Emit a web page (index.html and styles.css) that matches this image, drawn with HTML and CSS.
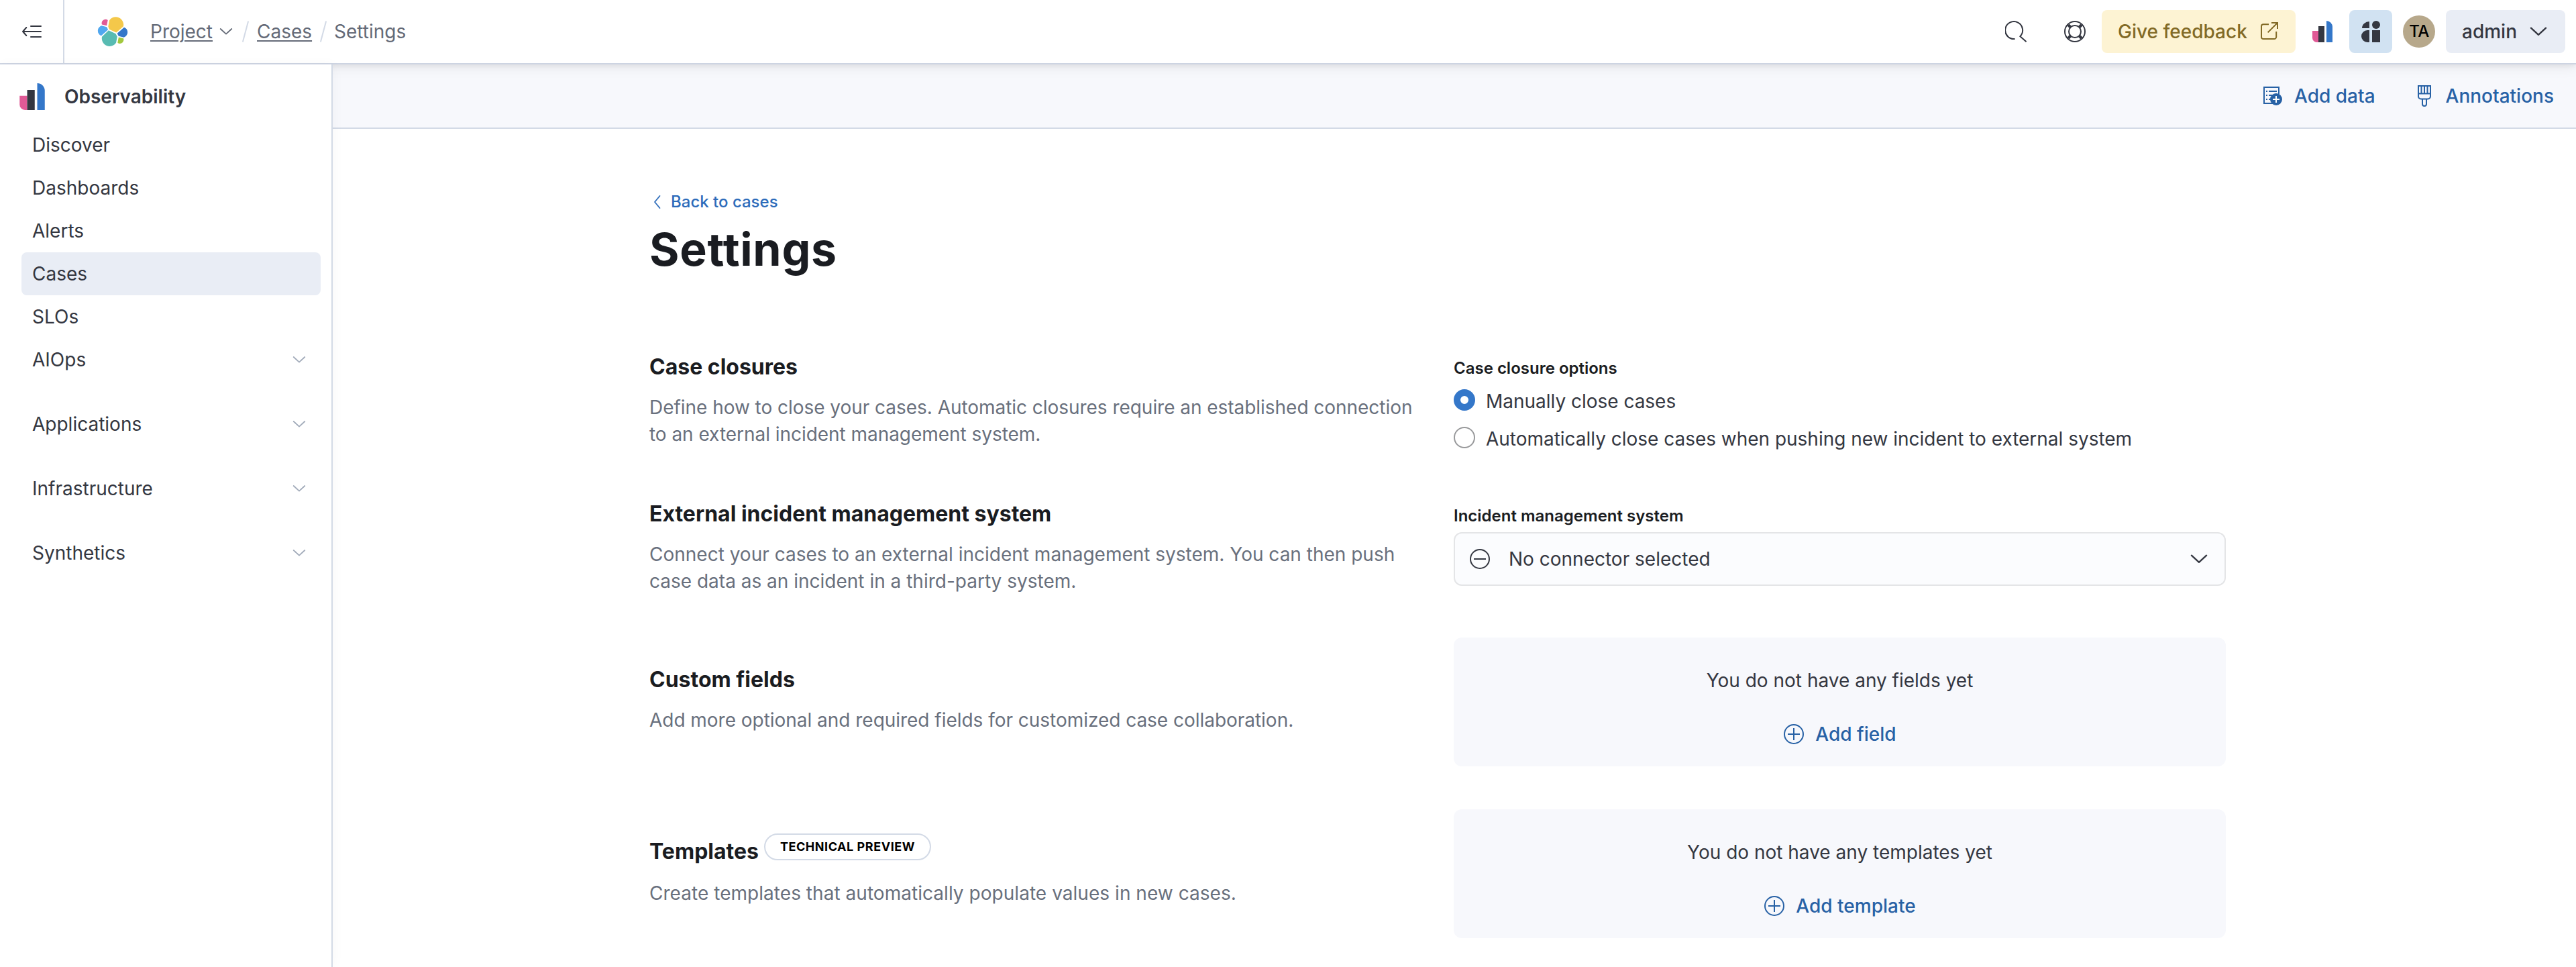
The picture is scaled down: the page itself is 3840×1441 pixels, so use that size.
FILE: index.html
```html
<!DOCTYPE html>
<html lang="en">
<head>
<meta charset="utf-8">
<title>Settings - Cases</title>
<link rel="stylesheet" href="styles.css">
</head>
<body>
<svg class="defs" width="0" height="0" aria-hidden="true">
  <symbol id="chevron" viewBox="0 0 32 32"><path d="M4.900 10.700 16 20.800 27.100 10.700" fill="none" stroke="currentColor" stroke-width="2.400" stroke-linecap="round" stroke-linejoin="round"/></symbol>
  <symbol id="observability" viewBox="0 0 32 32"><path fill="#e05a96" d="M1 15v10.500A6.500 6.500 0 0 0 7.500 32H10V15z"/><path fill="#343741" d="M10 8h9v24h-9z"/><path fill="#3477c9" d="M22 32h9V9a9 9 0 0 0-9-9z"/></symbol>
  <symbol id="plus-circle" viewBox="0 0 32 32"><g fill="none" stroke="currentColor" stroke-width="2"><circle cx="16" cy="16" r="14"/><path d="M16 7v18M7 16h18"/></g></symbol>
</svg>

<header class="header">
  <button class="menu-button" aria-label="Collapse navigation"><svg class="icon" viewBox="0 0 32 32"><path d="M3 16h27M15 8H30M15 24H30M8.300 10 3 16l5.300 6" fill="none" stroke="currentColor" stroke-width="2" stroke-linecap="round" stroke-linejoin="round"/></svg></button>
  <svg class="elastic-logo" viewBox="0 0 32 32"><path fill="#f4c84a" d="M12.580 13.787l7.002 3.211 7.066-6.213a7.850 7.850 0 0 0 .152-1.557c0-4.287-3.464-7.775-7.722-7.775a7.708 7.708 0 0 0-6.372 3.380l-1.176 6.126z"/><path fill="#58bbb2" d="M5.333 21.228A7.964 7.964 0 0 0 5.180 22.800c0 4.300 3.486 7.800 7.770 7.800a7.730 7.730 0 0 0 6.415-3.420l1.166-6.104-1.557-2.992-7.030-3.220z"/><path fill="#e05a96" d="M5.288 9.067l4.800 1.137L11.140 4.730a3.786 3.786 0 0 0-6.090 3.030 3.810 3.810 0 0 0 .239 1.307"/><path fill="#50a7ef" d="M4.872 10.214c-2.145.714-3.640 2.779-3.640 5.052 0 2.213 1.363 4.190 3.410 4.973l6.735-6.120-1.236-2.656z"/><path fill="#a2c83e" d="M20.873 27.180a3.748 3.748 0 0 0 2.286.782 3.786 3.786 0 0 0 3.785-3.790 3.810 3.810 0 0 0-.238-1.305l-4.796-1.127z"/><path fill="#3477c9" d="M21.848 20.563l5.280 1.238c2.147-.715 3.640-2.780 3.640-5.054a5.328 5.328 0 0 0-3.418-4.965l-6.905 6.080z"/></svg>
  <nav class="breadcrumbs">
    <a class="crumb-link project" href="#">Project</a><svg class="crumb-chevron"><use href="#chevron"/></svg>
    <span class="slash"></span>
    <a class="crumb-link" href="#">Cases</a>
    <span class="slash"></span>
    <span class="crumb-current">Settings</span>
  </nav>
  <div class="header-actions">
    <svg class="icon search" viewBox="0 0 16 16"><path d="M7.300 13.500A6.500 6.500 0 1 1 11.200 11.600L15.800 15.600" fill="none" stroke="currentColor"/></svg>
    <svg class="icon help" viewBox="0 0 32 32"><g fill="none" stroke="currentColor"><circle cx="16" cy="16" r="15" stroke-width="2"/><circle cx="16" cy="16" r="9" stroke-width="2"/><path d="m6 6 4 4m12 12 4 4M26 6l-4 4M10 22l-4 4" stroke-width="4.500"/></g></svg>
    <a class="button feedback" href="#">Give feedback<svg class="icon" viewBox="0 0 16 16"><path d="M8 2.600H4A1.500 1.500 0 0 0 2.500 4.100v8A1.500 1.500 0 0 0 4 13.500h8.100a1.500 1.500 0 0 0 1.500-1.500V8M7.300 8.700l7.200-7.200M10 1.500h4.500V6" fill="none" stroke="currentColor"/></svg></a>
    <svg class="icon observability"><use href="#observability"/></svg>
    <button class="news" aria-label="What's new"><svg class="icon" viewBox="0 0 32 32" fill="currentColor"><path d="M3 11h11V1A11 10 0 0 0 3 11z"/><circle cx="24" cy="6" r="6"/><path d="M14 14v18h-3a9 9 0 0 1 0-18zM18 14h12v18H18z"/></svg></button>
    <span class="avatar">TA</span>
    <button class="button admin">admin<svg class="icon"><use href="#chevron"/></svg></button>
  </div>
</header>

<div class="page">
  <aside class="sidebar">
    <div class="solution"><svg class="solution-logo"><use href="#observability"/></svg>Observability</div>
    <nav class="nav">
      <a class="nav-item">Discover</a>
      <a class="nav-item">Dashboards</a>
      <a class="nav-item">Alerts</a>
      <a class="nav-item selected">Cases</a>
      <a class="nav-item">SLOs</a>
      <a class="nav-item group">AIOps<svg class="nav-chevron"><use href="#chevron"/></svg></a>
      <a class="nav-item group">Applications<svg class="nav-chevron"><use href="#chevron"/></svg></a>
      <a class="nav-item group">Infrastructure<svg class="nav-chevron"><use href="#chevron"/></svg></a>
      <a class="nav-item group">Synthetics<svg class="nav-chevron"><use href="#chevron"/></svg></a>
    </nav>
  </aside>

  <div class="main">
    <div class="toolbar">
      <a class="action" href="#"><svg class="icon" viewBox="0 0 32 32"><path d="M3 3h22v24H3z" fill="none" stroke="currentColor" stroke-width="2"/><path d="M6 9h2M10 9h12M6 15h2M10 15h8M6 21h2M10 21h6" stroke="currentColor" stroke-width="2"/><circle cx="21" cy="21" r="9" fill="currentColor"/><path d="M21 16v10M16 21h10" stroke="#fff" stroke-width="2"/></svg>Add data</a>
      <a class="action" href="#"><svg class="icon" viewBox="0 0 32 32"><path d="M7 1h18v15.500a4 4 0 0 1-4 4H11a4 4 0 0 1-4-4zM7 12.500h18M11.500 1v11M16 1v11M20.500 1v11M13 20.500V28a3 3 0 0 0 6 0v-7.500" fill="none" stroke="currentColor" stroke-width="2"/></svg>Annotations</a>
    </div>

    <main class="content">
      <a class="back" href="#"><svg class="back-chevron" viewBox="0 0 24 24"><path d="M15.500 3 8 12l7.500 9" fill="none" stroke="currentColor" stroke-width="1.800" stroke-linecap="round" stroke-linejoin="round"/></svg>Back to cases</a>
      <h1 class="page-title">Settings</h1>

      <section class="row closures">
        <div class="about">
          <h2>Case closures</h2>
          <p>Define how to close your cases. Automatic closures require an established connection<br>to an external incident management system.</p>
        </div>
        <div class="control">
          <div class="label">Case closure options</div>
          <label class="option"><span class="radio checked"></span><span class="option-text">Manually close cases</span></label>
          <label class="option"><span class="radio"></span><span class="option-text">Automatically close cases when pushing new incident to external system</span></label>
        </div>
      </section>

      <section class="row connector">
        <div class="about">
          <h2>External incident management system</h2>
          <p>Connect your cases to an external incident management system. You can then push<br>case data as an incident in a third-party system.</p>
        </div>
        <div class="control">
          <div class="label">Incident management system</div>
          <div class="select"><svg class="icon" viewBox="0 0 32 32"><g fill="none" stroke="currentColor" stroke-width="2"><circle cx="16" cy="16" r="14"/><path d="M7 16h18"/></g></svg><span class="select-value">No connector selected</span><svg class="icon"><use href="#chevron"/></svg></div>
        </div>
      </section>

      <section class="row fields">
        <div class="about">
          <h2>Custom fields</h2>
          <p>Add more optional and required fields for customized case collaboration.</p>
        </div>
        <div class="panel">
          <span>You do not have any fields yet</span>
          <a class="action" href="#"><svg class="icon"><use href="#plus-circle"/></svg>Add field</a>
        </div>
      </section>

      <section class="row templates">
        <div class="about">
          <h2>Templates<span class="badge">Technical preview</span></h2>
          <p>Create templates that automatically populate values in new cases.</p>
        </div>
        <div class="panel">
          <span>You do not have any templates yet</span>
          <a class="action" href="#"><svg class="icon"><use href="#plus-circle"/></svg>Add template</a>
        </div>
      </section>
    </main>
  </div>
</div>
</body>
</html>
```
FILE: styles.css
```css
* { box-sizing: border-box; }
body {
  margin: 0;
  height: 1441px;
  overflow: hidden;
  display: flex;
  flex-direction: column;
  background: #fff;
  color: #343741;
  font: 400 28px/40px Inter, "Liberation Sans", sans-serif;
}
a { color: inherit; text-decoration: none; }
button { border: 0; padding: 0; background: none; color: inherit; font: inherit; }
h1, h2, p { margin: 0; }
svg { flex: none; display: block; }
.defs { position: absolute; }
.icon { width: 32px; height: 32px; }

/* Header */
.header {
  position: relative;
  z-index: 2;
  flex: none;
  height: 96px;
  display: flex;
  align-items: center;
  background: #fff;
  border-bottom: 2px solid #cdd4e2;
  box-shadow: 0 2px 8px rgba(0, 0, 0, .07), 0 6px 18px rgba(0, 0, 0, .06);
}
.menu-button {
  width: 96px;
  height: 94px;
  padding-left: 31px;
  border-right: 2px solid #d3dae6;
}
.elastic-logo { width: 48px; height: 48px; margin-left: 48px; }
.breadcrumbs { display: flex; align-items: center; margin-left: 32px; color: #646a77; }
.crumb-link { text-decoration: underline; text-decoration-thickness: 2px; text-underline-offset: 3px; }
.crumb-chevron { width: 24px; height: 24px; margin-left: 8px; }
.slash { width: 2px; height: 32px; margin: 0 16px; background: #d3dae6; transform: rotate(15deg); }
.crumb-current { margin-left: -1px; }
.header-actions { display: flex; align-items: center; margin-left: auto; margin-right: 16px; }
.search { margin-right: 56px; }
.help { margin-right: 24px; }
.button {
  height: 64px;
  padding: 0 24px;
  display: flex;
  align-items: center;
  justify-content: space-between;
  border-radius: 8px;
  font-weight: 500;
}
.feedback { width: 289px; background: #fdf3d3; color: #826a26; }
.observability { margin: 0 24px; }
.news {
  width: 64px;
  height: 64px;
  display: grid;
  place-items: center;
  border-radius: 8px;
  background: #d1e2f2;
}
.avatar {
  width: 48px;
  height: 48px;
  margin: 0 16px;
  border-radius: 50%;
  background: #b7a88b;
  color: #000;
  font-size: 24px;
  font-weight: 500;
  line-height: 48px;
  text-align: center;
  letter-spacing: -.5px;
}
.admin { width: 178px; background: #e9edf5; }

/* Sidebar */
.page { flex: 1; display: flex; min-height: 0; }
.sidebar {
  position: relative;
  z-index: 3;
  flex: none;
  width: 496px;
  padding: 16px 16px 0;
  background: #fff;
  border-right: 2px solid #d3dae6;
  box-shadow: 2px 0 16px rgba(0, 0, 0, .03);
}
.solution {
  height: 64px;
  margin: 0 0 8px 12px;
  display: flex;
  align-items: center;
  gap: 28px;
  font-weight: 600;
}
.solution-logo { width: 40px; height: 40px; }
.nav { padding-left: 16px; }
.nav-item {
  height: 64px;
  padding: 0 20px 0 16px;
  display: flex;
  align-items: center;
  justify-content: space-between;
  border-radius: 8px;
}
.nav-item.selected { background: #e9edf5; }
.nav-item.group { margin-bottom: 32px; }
.nav-chevron { width: 24px; height: 24px; color: #a2abba; }

/* Main */
.main { flex: 1; min-width: 0; }
.toolbar {
  height: 96px;
  padding-right: 33px;
  display: flex;
  align-items: center;
  justify-content: flex-end;
  gap: 57px;
  background: #f7f8fc;
  border-bottom: 2px solid #d3dae6;
}
.action {
  display: flex;
  align-items: center;
  gap: 16px;
  color: #2761a5;
  font-weight: 500;
}
.content { width: 2350px; margin-left: 472px; padding-top: 89px; }
.back {
  height: 40px;
  display: flex;
  align-items: center;
  gap: 8px;
  color: #2c6bba;
  font-size: 24px;
  font-weight: 500;
}
.back-chevron { width: 24px; height: 24px; }
.page-title {
  margin-top: 10px;
  color: #1a1c21;
  font-size: 68px;
  font-weight: 700;
  line-height: 80px;
  letter-spacing: .7px;
}
.row { display: grid; grid-template-columns: 1151px 1151px; column-gap: 48px; }
.closures { height: 220px; margin-top: 115px; }
.connector { height: 204px; }
.fields { height: 256px; }
h2 { height: 40px; color: #1a1c21; font-size: 32px; font-weight: 700; line-height: 40px; }
.about p { margin-top: 20px; color: #69707d; }
.closures .about { padding-top: 1px; }
.closures .about p { letter-spacing: -.04px; }
.fields .about, .templates .about { padding-top: 43px; }
.fields .about p { letter-spacing: -.03px; }
.templates .about p { margin-top: 22px; letter-spacing: .04px; }
.control { padding-top: 5px; }
.label { color: #1a1c21; font-size: 24px; font-weight: 600; line-height: 36px; }
.option { height: 32px; margin-top: 13px; display: flex; align-items: center; gap: 16px; letter-spacing: -.02px; }
.option + .option { margin-top: 24px; }
.option-text { padding-top: 4px; }
.radio { flex: none; width: 32px; height: 32px; border: 2px solid #98999b; border-radius: 50%; background: #fff; }
.radio.checked { border: 10px solid #3477c9; }
.select {
  height: 80px;
  margin-top: 6px;
  padding: 0 22px 0 21px;
  display: flex;
  align-items: center;
  border: 2px solid #e4e5e7;
  border-radius: 12px;
  background: #fbfcfe;
}
.select-value { flex: 1; margin-left: 27px; }
.panel {
  height: 192px;
  padding: 44px 0 28px;
  display: flex;
  flex-direction: column;
  align-items: center;
  justify-content: space-between;
  border-radius: 12px;
  background: #f7f8fc;
}
.badge {
  display: inline-block;
  height: 40px;
  margin-left: 8px;
  padding: 0 22px;
  border: 2px solid #d3dae6;
  border-radius: 20px;
  color: #000;
  font-size: 18px;
  line-height: 36px;
  letter-spacing: .55px;
  text-transform: uppercase;
  vertical-align: top;
  position: relative;
  top: -7px;
}
```
